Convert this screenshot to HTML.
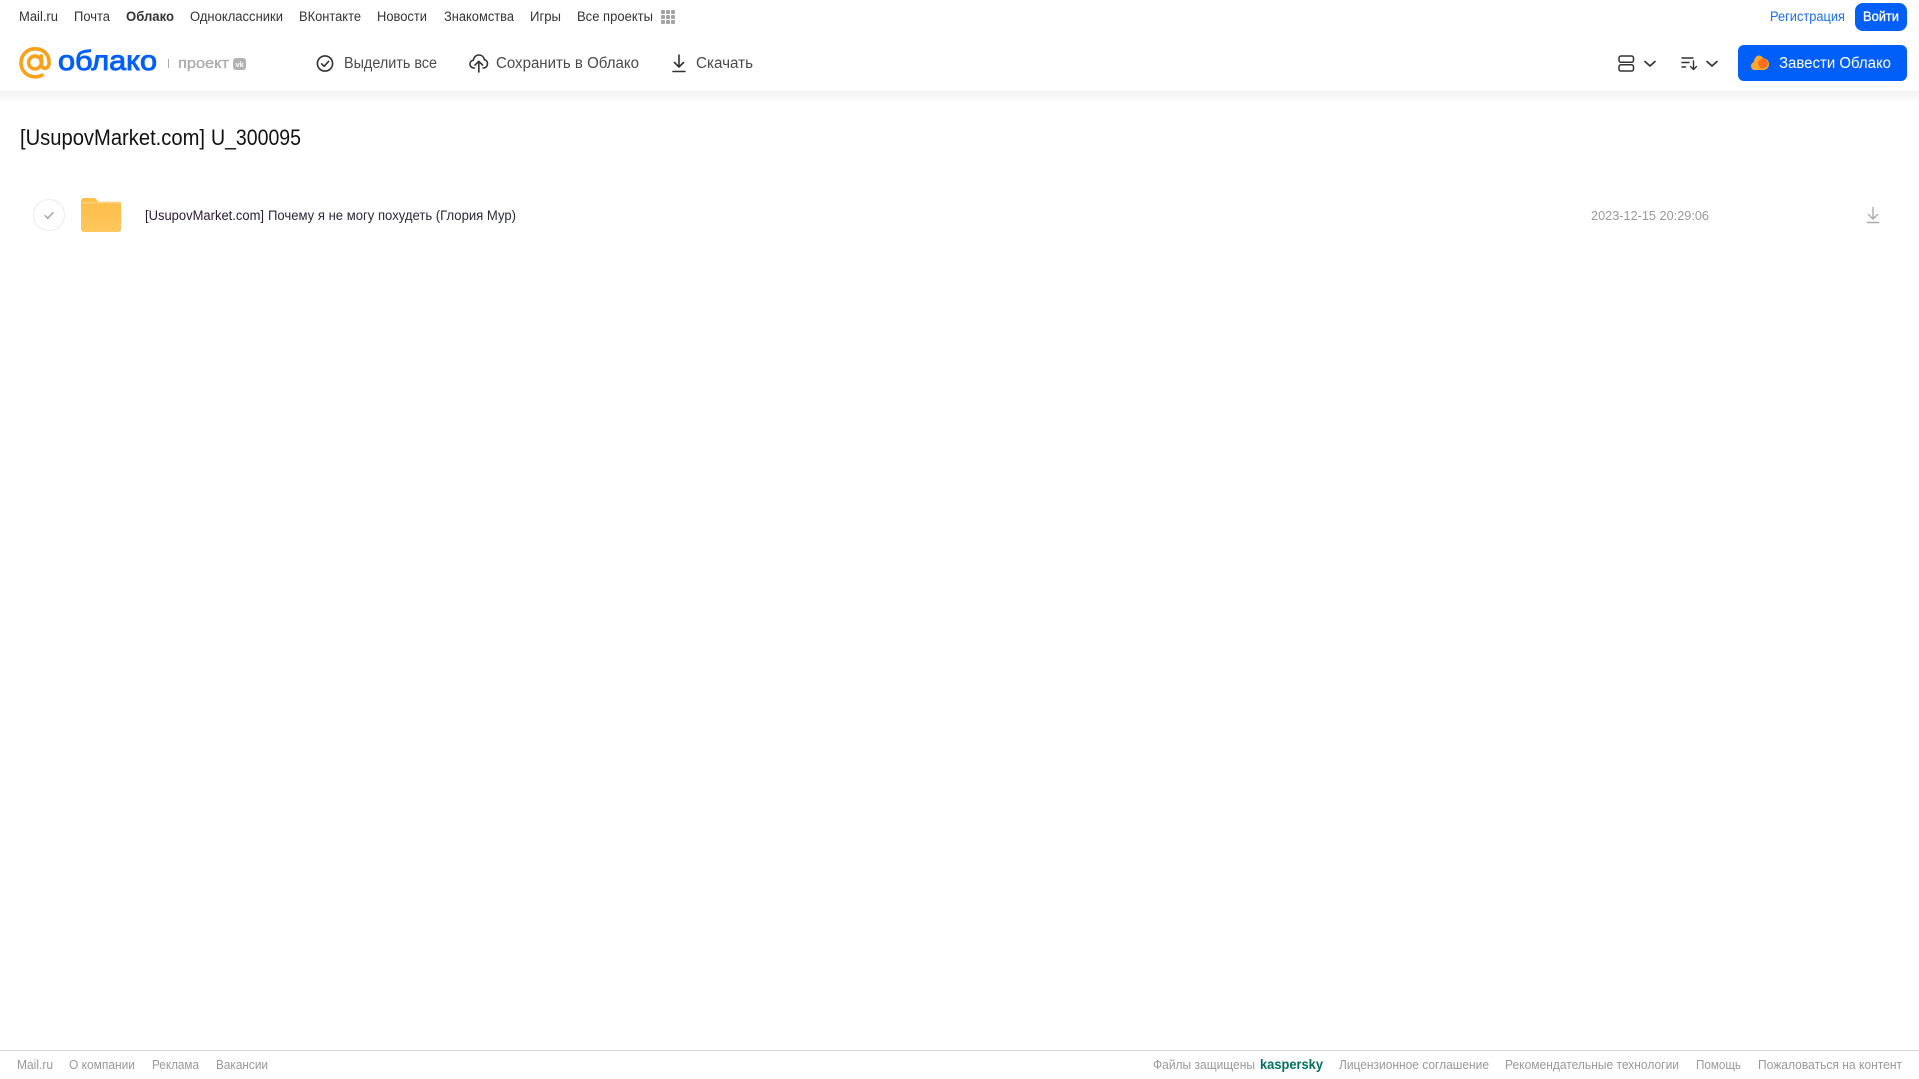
<!DOCTYPE html>
<html lang="ru"><head><meta charset="utf-8"><title>Облако</title>
<style>
html,body{margin:0;padding:0;background:#fff;width:1919px;height:1079px;overflow:hidden}
svg{display:block;position:absolute;left:0;top:0}
text{font-family:"Liberation Sans",sans-serif}
.n{font-size:13.5px;fill:#333}
.t{font-size:15.5px;fill:#4a4a4a}
.f{font-size:12.5px;fill:#999}
</style></head><body>
<svg width="1919" height="1079" viewBox="0 0 1919 1079" xmlns="http://www.w3.org/2000/svg">
<defs><linearGradient id="sh" x1="0" y1="0" x2="0" y2="1"><stop offset="0" stop-color="#f1f1f1"/><stop offset="1" stop-color="#fff"/></linearGradient>
<linearGradient id="fo" x1="0" y1="0" x2="0" y2="1"><stop offset="0" stop-color="#ffbd45"/><stop offset="1" stop-color="#ffc75f"/></linearGradient></defs>
<rect x="0" y="91" width="1919" height="12" fill="url(#sh)"/>

<text class="n" x="19" y="21" textLength="39" lengthAdjust="spacingAndGlyphs">Mail.ru</text>
<text class="n" x="74" y="21" textLength="36" lengthAdjust="spacingAndGlyphs">Почта</text>
<text class="n" x="126" y="21" textLength="48" lengthAdjust="spacingAndGlyphs" font-weight="700">Облако</text>
<text class="n" x="190" y="21" textLength="93" lengthAdjust="spacingAndGlyphs">Одноклассники</text>
<text class="n" x="299" y="21" textLength="62" lengthAdjust="spacingAndGlyphs">ВКонтакте</text>
<text class="n" x="377" y="21" textLength="50" lengthAdjust="spacingAndGlyphs">Новости</text>
<text class="n" x="444" y="21" textLength="70" lengthAdjust="spacingAndGlyphs">Знакомства</text>
<text class="n" x="530" y="21" textLength="31" lengthAdjust="spacingAndGlyphs">Игры</text>
<text class="n" x="577" y="21" textLength="76" lengthAdjust="spacingAndGlyphs">Все проекты</text>
<g fill="#a3a3a3"><rect x="661" y="10" width="4" height="4" rx="1"/><rect x="666" y="10" width="4" height="4" rx="1"/><rect x="671" y="10" width="4" height="4" rx="1"/><rect x="661" y="15" width="4" height="4" rx="1"/><rect x="666" y="15" width="4" height="4" rx="1"/><rect x="671" y="15" width="4" height="4" rx="1"/><rect x="661" y="20" width="4" height="4" rx="1"/><rect x="666" y="20" width="4" height="4" rx="1"/><rect x="671" y="20" width="4" height="4" rx="1"/></g>

<text class="n" x="1770" y="21" textLength="75" lengthAdjust="spacingAndGlyphs" style="fill:#1a6fe8">Регистрация</text>
<rect x="1855" y="3" width="52" height="28" rx="8" fill="#005ff9"/>
<text class="n" x="1863" y="21" textLength="36" lengthAdjust="spacingAndGlyphs" stroke="#fff" stroke-width=".35" style="fill:#fff">Войти</text>

<!-- logo -->
<g fill="none" stroke="#f9a11b" stroke-width="3.6" stroke-linecap="round">
<circle cx="35" cy="62.5" r="6.4"/>
<path d="M41.4 56v8.500c0 5.200 7.600 5.200 7.700-1.500C49.300 53.800 43 48.800 35 48.800c-8.200 0-14 6.400-14 14 0 8.200 6.200 14 14 14 2.700 0 5-.5 7-1.600"/>
</g>
<text x="58" y="70" font-size="28" fill="#005ff9" stroke="#005ff9" stroke-width=".9" textLength="99" lengthAdjust="spacingAndGlyphs">облако</text>
<rect x="168" y="59" width="1" height="9" fill="#aaa"/>
<text x="178" y="68" font-size="15" fill="#aaa" stroke="#aaa" stroke-width=".3" textLength="51" lengthAdjust="spacingAndGlyphs">проект</text>
<rect x="233" y="58" width="13" height="12" rx="3" fill="#b2b2b2"/>
<text x="235.500" y="67" font-size="7.500" font-weight="700" fill="#fff">vk</text>

<!-- toolbar -->
<g fill="none" stroke="#333" stroke-width="1.600" stroke-linecap="round" stroke-linejoin="round">
<circle cx="325" cy="63.500" r="7.600"/>
<path d="M321.600 63.800l2.500 2.500 4.600-5"/>
<g transform="translate(0,-2.500)">
<path d="M474.500 70.500h-.5c-2.500 0-4-1.900-4-3.900 0-2 1.400-3.600 3.300-3.800.4-3.200 2.900-5.300 5.600-5.300 2.900 0 5 2 5.500 4.700 1.900.3 3.100 2 3.100 3.900 0 2.300-1.600 4.400-4 4.400h-.5"/>
<path d="M478.800 74.500v-10M475 67.600l3.800-3.800 3.800 3.800"/>
</g>
<path d="M679 55v12M674.500 62.500l4.500 4.500 4.500-4.500"/>
<path d="M673 71.500h12"/>
</g>
<text class="t" x="344" y="68" textLength="93" lengthAdjust="spacingAndGlyphs">Выделить все</text>
<text class="t" x="496" y="68" textLength="143" lengthAdjust="spacingAndGlyphs">Сохранить в Облако</text>
<text class="t" x="696" y="68" textLength="57" lengthAdjust="spacingAndGlyphs">Скачать</text>

<!-- view/sort -->
<g fill="none" stroke="#333" stroke-linecap="round" stroke-linejoin="round">
<g stroke-width="1.500">
<rect x="1619" y="56" width="14.500" height="6.300" rx="2"/>
<rect x="1619" y="64.700" width="14.500" height="6.300" rx="2"/>
</g>
<g stroke-width="1.700">
<path d="M1645 61.500l5 4.500 5-4.500"/>
<path d="M1707 61.500l5 4.500 5-4.500"/>
</g>
<g stroke-width="1.400">
<path d="M1682 58h11M1682 62.500h7M1682 67h3.500"/>
<path d="M1693.500 61v8.500M1690.500 66.500l3 3 3-3"/>
</g>
</g>

<!-- CTA -->
<rect x="1738" y="45" width="169" height="36" rx="6" fill="#005ff9"/>
<path d="M1755 70c-2.500 0-4-1.800-4-3.900 0-1.900 1.200-3.300 2.800-3.800.4-3.700 2.500-6.800 5-6.800 2 0 3.500 1.200 4.300 2.800 3.300 0 5.900 2.500 5.900 5.800 0 3.500-2.500 5.900-5.800 5.900z" fill="#ffa930"/>
<circle cx="1763" cy="63.500" r="5" fill="#f5711e"/>
<text x="1779" y="68" font-size="15.500" fill="#fff" textLength="112" lengthAdjust="spacingAndGlyphs">Завести Облако</text>

<!-- title -->
<text x="20" y="145" font-size="22" fill="#111" textLength="185" lengthAdjust="spacingAndGlyphs">[UsupovMarket.com]</text>
<text x="211" y="145" font-size="22" fill="#111" textLength="90" lengthAdjust="spacingAndGlyphs">U_300095</text>

<!-- row -->
<circle cx="49" cy="215" r="15.500" fill="#fff" stroke="#ececec" stroke-width="1"/>
<path d="M45 215.500l2.800 2.800 5.200-5.600" fill="none" stroke="#a5a5a5" stroke-width="1.500" stroke-linecap="round" stroke-linejoin="round"/>
<path d="M81 201c0-1.700 1.300-3 3-3h9.500c1.500 0 2.300.6 3.200 1.700l1.600 2.100H118c1.700 0 3 1.300 3 3V229c0 1.700-1.300 3-3 3H84c-1.700 0-3-1.300-3-3z" fill="url(#fo)"/>
<rect x="81" y="202" width="40" height="1.500" fill="#ffd27f"/>
<text x="145" y="220" font-size="13.500" fill="#2a1a3a" textLength="119" lengthAdjust="spacingAndGlyphs">[UsupovMarket.com]</text>
<text x="268" y="220" font-size="13.500" fill="#2a2a3a" textLength="248" lengthAdjust="spacingAndGlyphs">Почему я не могу похудеть (Глория Мур)</text>
<text x="1591" y="220" font-size="13" fill="#999" textLength="118" lengthAdjust="spacingAndGlyphs">2023-12-15 20:29:06</text>
<g fill="none" stroke="#aaa" stroke-width="1.400" stroke-linecap="round" stroke-linejoin="round">
<path d="M1873 207.500v11.500M1868.500 214.500l4.500 4.500 4.500-4.500"/>
<path d="M1867.500 222.500h11"/>
</g>

<!-- footer -->
<rect x="0" y="1050" width="1919" height="1" fill="#d8d8d8"/>
<text class="f" x="17" y="1069" textLength="36" lengthAdjust="spacingAndGlyphs">Mail.ru</text>
<text class="f" x="69" y="1069" textLength="66" lengthAdjust="spacingAndGlyphs">О компании</text>
<text class="f" x="152" y="1069" textLength="47" lengthAdjust="spacingAndGlyphs">Реклама</text>
<text class="f" x="216" y="1069" textLength="52" lengthAdjust="spacingAndGlyphs">Вакансии</text>
<text class="f" x="1153" y="1069" textLength="102" lengthAdjust="spacingAndGlyphs">Файлы защищены</text>
<text x="1260" y="1069" font-size="13.500" font-weight="700" fill="#00715f" textLength="63" lengthAdjust="spacingAndGlyphs">kaspersky</text>
<text class="f" x="1339" y="1069" textLength="150" lengthAdjust="spacingAndGlyphs">Лицензионное соглашение</text>
<text class="f" x="1505" y="1069" textLength="174" lengthAdjust="spacingAndGlyphs">Рекомендательные технологии</text>
<text class="f" x="1696" y="1069" textLength="45" lengthAdjust="spacingAndGlyphs">Помощь</text>
<text class="f" x="1758" y="1069" textLength="144" lengthAdjust="spacingAndGlyphs">Пожаловаться на контент</text>
</svg>
</body></html>
